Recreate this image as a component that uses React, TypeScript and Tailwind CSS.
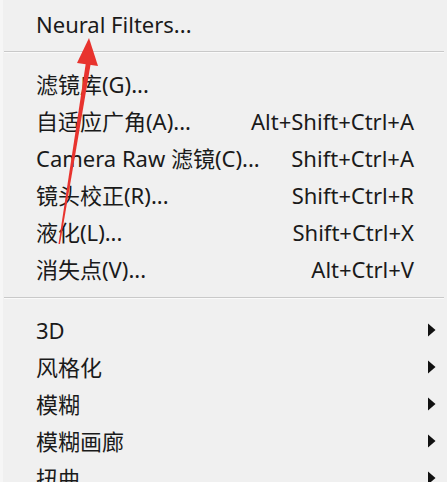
import React from "react";

type Item = { label: string; shortcut?: string; sub?: boolean };

const groupOne: Item[] = [{ label: "Neural Filters..." }];

const groupTwo: Item[] = [
  { label: "滤镜库(G)..." },
  { label: "自适应广角(A)...", shortcut: "Alt+Shift+Ctrl+A" },
  { label: "Camera Raw 滤镜(C)...", shortcut: "Shift+Ctrl+A" },
  { label: "镜头校正(R)...", shortcut: "Shift+Ctrl+R" },
  { label: "液化(L)...", shortcut: "Shift+Ctrl+X" },
  { label: "消失点(V)...", shortcut: "Alt+Ctrl+V" },
];

const groupThree: Item[] = [
  { label: "3D", sub: true },
  { label: "风格化", sub: true },
  { label: "模糊", sub: true },
  { label: "模糊画廊", sub: true },
  { label: "扭曲", sub: true },
];

const Row = ({ item }: { item: Item }) => (
  <div className="h-[37px] flex items-center pl-[36px] pr-[11px]">
    <span className="flex-1 whitespace-nowrap">{item.label}</span>
    {item.shortcut && (
      <span className="whitespace-nowrap mr-[22px]">{item.shortcut}</span>
    )}
    {item.sub && (
      <svg width="9" height="14" viewBox="0 0 9 14" className="shrink-0">
        <path d="M1 0.5 L8.5 7 L1 13.5 Z" fill="#111" />
      </svg>
    )}
  </div>
);

const Separator = ({ className }: { className: string }) => (
  <div className={`mx-[4px] mr-[3px] h-[2px] border-t border-[#c9c9c9] bg-[#fafafa] ${className}`} />
);

export default function App() {
  return (
    <div className="relative w-[447px] h-[482px] overflow-hidden bg-[#f0f0f0] border-l-[3px] border-[#f6f6f6]">
      <div
        className="pt-[5px] text-[22px] text-[#1a1a1a] leading-none -ml-[3px]"
        style={{ fontFamily: '"Noto Sans", "Noto Sans CJK SC", sans-serif' }}
      >
        {groupOne.map((it) => (
          <Row key={it.label} item={it} />
        ))}
        <Separator className="mt-[9px] mb-[12px]" />
        {groupTwo.map((it) => (
          <Row key={it.label} item={it} />
        ))}
        <Separator className="mt-[10px] mb-[12px]" />
        {groupThree.map((it) => (
          <Row key={it.label} item={it} />
        ))}
      </div>
      <svg
        className="absolute left-[-3px] top-0 pointer-events-none"
        width="447"
        height="482"
        viewBox="0 0 447 482"
      >
        <path d="M86 62 L91 62 L60 244 L58.5 244 Z" fill="#e8332e" />
        <path d="M89 38 L98 66 L77 63 Z" fill="#e8332e" />
      </svg>
    </div>
  );
}
